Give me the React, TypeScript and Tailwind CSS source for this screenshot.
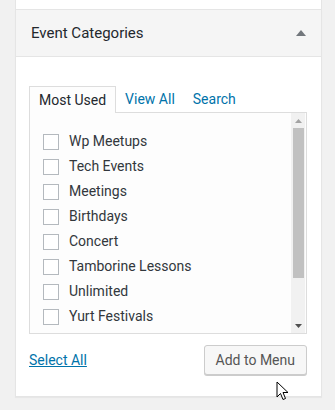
const categories = [
  "Wp Meetups",
  "Tech Events",
  "Meetings",
  "Birthdays",
  "Concert",
  "Tamborine Lessons",
  "Unlimited",
  "Yurt Festivals",
]

function Cursor() {
  return (
    <svg width="14" height="20" viewBox="0 0 14 20" className="absolute left-[276px] top-[381px]">
      <path d="M1 1 L1 16 L4.5 12.5 L7 18.5 L9.5 17.5 L7 11.5 L12 11.5 Z" fill="#fff" stroke="#000" strokeWidth="1" strokeLinejoin="round" />
    </svg>
  )
}

export default function App() {
  return (
    <div className="relative w-[335px] h-[410px] bg-[#f1f1f1] overflow-hidden font-['Roboto',sans-serif]">
      <div className="ml-[15px] w-[307px] h-[10px] bg-white border-x border-b border-[#e5e5e5]" />
      <div className="ml-[15px] w-[307px] bg-white border-x border-b border-[#e5e5e5] shadow-[0_1px_1px_rgba(0,0,0,0.04)]">
        <div className="flex items-center justify-between h-[47px] pl-[15px] pr-[15px] bg-[#f5f5f5] border-b border-[#e5e5e5]">
          <span className="text-[15px] text-[#23282d]">Event Categories</span>
          <svg width="10" height="6" viewBox="0 0 10 6">
            <path d="M0 6 L5 0 L10 6 Z" fill="#72777c" />
          </svg>
        </div>
        <div className="pt-[29px] pb-[21px] pl-[13px] pr-[14px]">
          <div className="flex items-end text-[14px]">
            <div className="h-[27px] px-[9px] flex items-center border border-b-0 border-[#ddd] bg-[#fdfdfd] text-[#23282d] -mb-px relative z-10">
              Most Used
            </div>
            <div className="h-[26px] px-[9px] flex items-center text-[#0073aa]">View All</div>
            <div className="h-[26px] px-[9px] flex items-center text-[#0073aa]">Search</div>
          </div>
          <div className="flex h-[222px] border border-[#ddd] bg-[#fdfdfd] overflow-hidden">
            <div className="flex-1 pt-[16px] pl-[13px] overflow-hidden">
              {categories.map((c) => (
                <div key={c} className="flex items-center h-[25px] gap-[10px] text-[14px] text-[#32373c]">
                  <span className="w-4 h-4 shrink-0 border border-[#b4b9be] bg-white" />
                  <span>{c}</span>
                </div>
              ))}
              <div className="flex items-center h-[25px]">
                <span className="w-4 h-4 shrink-0 border border-[#b4b9be] bg-white" />
              </div>
            </div>
            <div className="w-[14px] mr-px flex flex-col items-center bg-[#f1f1f1]">
              <div className="h-[15px] flex items-center justify-center">
                <svg width="7" height="4" viewBox="0 0 7 4">
                  <path d="M0 4 L3.5 0 L7 4 Z" fill="#a3a3a3" />
                </svg>
              </div>
              <div className="w-[11px] h-[150px] bg-[#c1c1c1]" />
              <div className="flex-1" />
              <div className="h-[15px] flex items-center justify-center">
                <svg width="7" height="4" viewBox="0 0 7 4">
                  <path d="M0 0 L3.5 4 L7 0 Z" fill="#505050" />
                </svg>
              </div>
            </div>
          </div>
          <div className="flex items-center justify-between mt-[11px]">
            <span className="text-[14px] text-[#0073aa] underline">Select All</span>
            <button className="h-[30px] px-[11px] text-[14px] text-[#555] bg-[#f7f7f7] border border-[#ccc] rounded-[3px] shadow-[0_1px_0_#ccc]">
              Add to Menu
            </button>
          </div>
        </div>
      </div>
      <Cursor />
    </div>
  )
}
